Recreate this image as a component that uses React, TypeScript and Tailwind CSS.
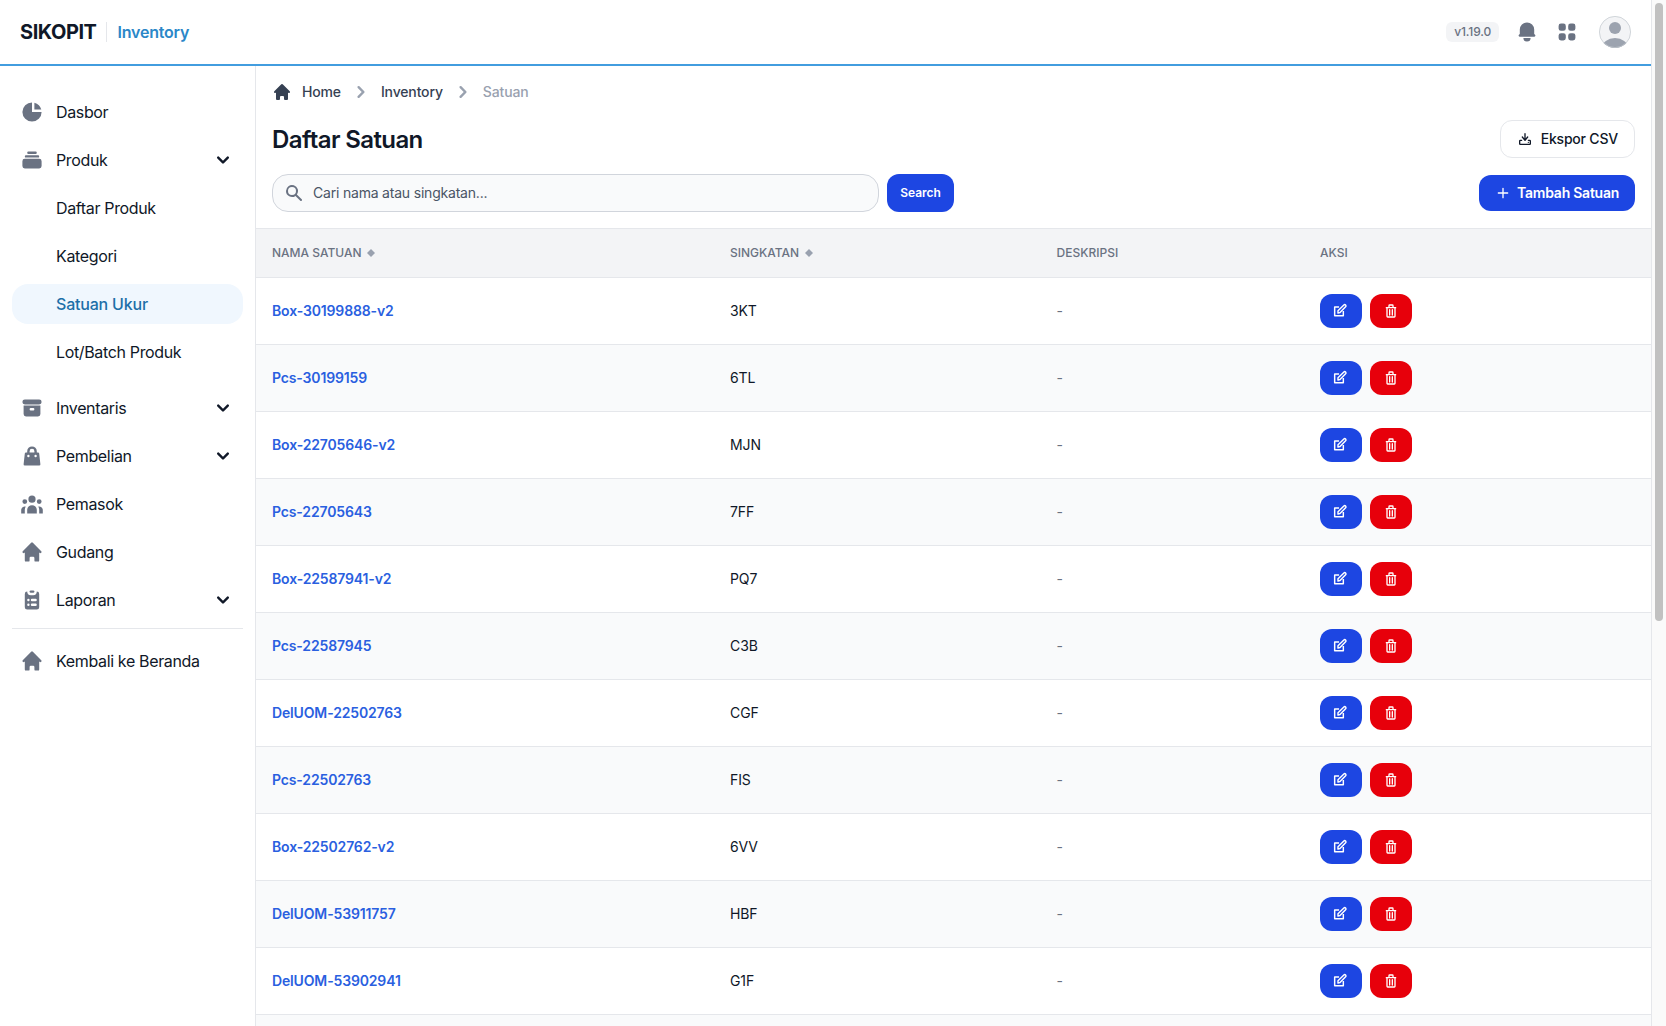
import type { ReactNode } from 'react';
import {
  HiArchive,
  HiBell,
  HiChartPie,
  HiChevronDown,
  HiChevronRight,
  HiClipboardList,
  HiCollection,
  HiHome,
  HiSearch,
  HiShoppingBag,
  HiUserGroup,
  HiViewGrid,
} from 'react-icons/hi';

interface Unit {
  name: string;
  code: string;
}

const units: Unit[] = [
  { name: 'Box-30199888-v2', code: '3KT' },
  { name: 'Pcs-30199159', code: '6TL' },
  { name: 'Box-22705646-v2', code: 'MJN' },
  { name: 'Pcs-22705643', code: '7FF' },
  { name: 'Box-22587941-v2', code: 'PQ7' },
  { name: 'Pcs-22587945', code: 'C3B' },
  { name: 'DelUOM-22502763', code: 'CGF' },
  { name: 'Pcs-22502763', code: 'FIS' },
  { name: 'Box-22502762-v2', code: '6VV' },
  { name: 'DelUOM-53911757', code: 'HBF' },
  { name: 'DelUOM-53902941', code: 'G1F' },
];

const productLinks = ['Daftar Produk', 'Kategori', 'Satuan Ukur', 'Lot/Batch Produk'];

const StrokeIcon = ({ d, className }: { d: string; className: string }) => (
  <svg className={className} fill="none" viewBox="0 0 24 24" stroke="currentColor" aria-hidden="true">
    <path strokeLinecap="round" strokeLinejoin="round" strokeWidth="2" d={d} />
  </svg>
);

const EditIcon = () => (
  <svg className="mr-0.5 h-4 w-4" fill="none" viewBox="0 0 24 24" stroke="currentColor" aria-hidden="true">
    <path
      strokeLinecap="square"
      strokeLinejoin="round"
      strokeWidth="2.2"
      d="M9.5 6H4v13h13v-6M9 15v-3.4l8.8-8.5a1.8 1.8 0 0 1 2.6 2.6L12 14.3 9 15Z"
    />
  </svg>
);

const SidebarItem = ({ icon, label, expandable }: { icon: ReactNode; label: string; expandable?: boolean }) => (
  <a href="#" className="flex h-10 items-center rounded-lg p-2">
    <span className="text-2xl text-gray-500">{icon}</span>
    <span className="ml-3 flex-1">{label}</span>
    {expandable && <HiChevronDown className="h-6 w-6" />}
  </a>
);

const Sidebar = () => (
  <aside className="w-64 shrink-0 border-r border-gray-200 px-3 pt-[26px] text-base tracking-[-0.35px] text-gray-900">
    <nav className="flex flex-col gap-2">
      <SidebarItem icon={<HiChartPie />} label="Dasbor" />
      <SidebarItem icon={<HiCollection />} label="Produk" expandable />
      <ul className="flex flex-col gap-2 pb-2">
        {productLinks.map((label) => (
          <li key={label}>
            <a
              href="#"
              className={
                label === 'Satuan Ukur'
                  ? 'flex h-10 items-center rounded-2xl bg-[#f0f7fe] pl-11 font-medium tracking-[-0.2px] text-[#1d6fa8]'
                  : 'flex h-10 items-center pl-11'
              }
            >
              {label}
            </a>
          </li>
        ))}
      </ul>
      <SidebarItem icon={<HiArchive />} label="Inventaris" expandable />
      <SidebarItem icon={<HiShoppingBag />} label="Pembelian" expandable />
      <SidebarItem icon={<HiUserGroup />} label="Pemasok" />
      <SidebarItem icon={<HiHome />} label="Gudang" />
      <SidebarItem icon={<HiClipboardList />} label="Laporan" expandable />
      <div className="border-t border-gray-200 pt-3">
        <SidebarItem icon={<HiHome />} label="Kembali ke Beranda" />
      </div>
    </nav>
  </aside>
);

const Header = () => (
  <header className="flex h-[66px] shrink-0 items-center justify-between border-b-2 border-[#429ddf] pr-5 pl-5">
    <div className="flex items-center">
      <span className="text-xl font-bold tracking-[-0.45px] text-gray-900">SIKOPIT</span>
      <span className="ml-2.5 border-l border-gray-200 py-0.5 pl-2.5 text-base leading-4 font-semibold tracking-[-0.2px] text-[#2b87c8]">
        Inventory
      </span>
    </div>
    <div className="flex items-center text-gray-500">
      <span className="rounded-md bg-gray-100 px-2 py-0.5 text-xs font-medium tracking-[-0.15px]">v1.19.0</span>
      <HiBell className="ml-4 h-6 w-6" />
      <HiViewGrid className="ml-4 h-6 w-6" />
      <svg className="ml-5 h-8 w-8" viewBox="0 0 32 32" aria-hidden="true">
        <clipPath id="avatar">
          <circle cx="16" cy="16" r="16" />
        </clipPath>
        <g clipPath="url(#avatar)">
          <rect width="32" height="32" fill="#f3f4f6" />
          <circle cx="16" cy="12" r="6" fill="#9ca3af" />
          <ellipse cx="16" cy="32" rx="13" ry="10" fill="#9ca3af" />
        </g>
        <circle cx="16" cy="16" r="15.6" fill="none" stroke="#c3c8cf" strokeWidth="0.7" />
      </svg>
    </div>
  </header>
);

const Toolbar = () => (
  <section className="px-4 pt-4">
    <div className="flex h-5 items-center text-sm font-medium tracking-[-0.15px] text-gray-700">
      <HiHome className="mr-2.5 h-5 w-5" />
      Home
      <HiChevronRight className="mx-2 h-6 w-6 text-gray-400" />
      Inventory
      <HiChevronRight className="mx-2 h-6 w-6 text-gray-400" />
      <span className="text-gray-400">Satuan</span>
    </div>
    <div className="mt-[18px] flex h-[38px] items-center justify-between">
      <h1 className="pt-0.5 text-2xl font-semibold tracking-[-0.6px] text-gray-900">Daftar Satuan</h1>
      <button className="flex h-[38px] items-center rounded-xl border border-gray-200 px-4 text-sm font-medium tracking-[-0.2px] text-gray-900">
        <StrokeIcon
          className="mr-2 h-4 w-4"
          d="M12 13V4M7 14H5a1 1 0 0 0-1 1v4a1 1 0 0 0 1 1h14a1 1 0 0 0 1-1v-4a1 1 0 0 0-1-1h-2m-1-5-4 5-4-5m9 8h.01"
        />
        Ekspor CSV
      </button>
    </div>
    <div className="mt-4 flex h-[38px] items-center">
      <div className="flex h-[38px] w-[607px] items-center rounded-2xl border border-gray-300 bg-gray-50 pl-[11px] text-sm tracking-[-0.2px] text-gray-600">
        <HiSearch className="mr-[9px] h-5 w-5 text-gray-500" />
        Cari nama atau singkatan...
      </div>
      <button className="ml-2 h-[38px] w-[67px] rounded-xl bg-[#1d46e2] text-xs font-semibold text-white">Search</button>
      <button className="ml-auto flex h-9 items-center rounded-xl bg-[#1d46e2] px-4 text-sm font-semibold tracking-[-0.25px] text-white">
        <StrokeIcon className="mr-1.5 h-4 w-4" d="M5 12h14m-7 7V5" />
        Tambah Satuan
      </button>
    </div>
  </section>
);

const SortMark = () => (
  <svg className="ml-1.5 h-2 w-2 text-gray-400" viewBox="0 0 8 8" fill="currentColor" aria-hidden="true">
    <path d="M4 0l4 4-4 4-4-4z" />
  </svg>
);

const UnitTable = () => (
  <table className="mt-4 w-full table-fixed border-collapse text-left text-sm">
    <colgroup>
      <col className="w-[458px]" />
      <col className="w-[326.5px]" />
      <col className="w-[263.5px]" />
      <col />
    </colgroup>
    <thead className="border-y border-gray-200 bg-gray-100 text-xs text-gray-500">
      <tr className="h-[49px]">
        <th className="px-4 font-medium">
          <span className="flex items-center">
            NAMA SATUAN
            <SortMark />
          </span>
        </th>
        <th className="px-4 font-medium">
          <span className="flex items-center">
            SINGKATAN
            <SortMark />
          </span>
        </th>
        <th className="px-4 font-medium">DESKRIPSI</th>
        <th className="px-4 font-medium">AKSI</th>
      </tr>
    </thead>
    <tbody>
      {units.map((unit) => (
        <tr key={unit.name} className="h-[67px] border-b border-gray-200 even:bg-gray-50">
          <td className="px-4 font-semibold tracking-[-0.15px] text-[#2a5fe0]">{unit.name}</td>
          <td className="px-4 tracking-[-0.1px] text-gray-900">{unit.code}</td>
          <td className="px-4 text-gray-500">-</td>
          <td className="px-4">
            <div className="flex gap-2 text-white">
              <button aria-label="Edit" className="flex h-[34px] w-[42px] items-center justify-center rounded-xl bg-[#1d46e2]">
                <EditIcon />
              </button>
              <button aria-label="Hapus" className="flex h-[34px] w-[42px] items-center justify-center rounded-xl bg-[#e7000b]">
                <StrokeIcon
                  className="h-4 w-4"
                  d="M5 7h14m-9 3v8m4-8v8M10 3h4a1 1 0 0 1 1 1v3H9V4a1 1 0 0 1 1-1ZM6 7h12v13a1 1 0 0 1-1 1H7a1 1 0 0 1-1-1V7Z"
                />
              </button>
            </div>
          </td>
        </tr>
      ))}
      <tr className="h-[67px] bg-gray-50">
        <td colSpan={4} />
      </tr>
    </tbody>
  </table>
);

export default function App() {
  return (
    <div className="flex h-[1026px] w-[1666px] overflow-hidden bg-white font-['Inter',sans-serif]">
      <div className="flex w-[1651px] flex-col overflow-hidden">
        <Header />
        <div className="flex min-h-0 flex-1">
          <Sidebar />
          <main className="flex-1 overflow-hidden">
            <Toolbar />
            <UnitTable />
          </main>
        </div>
      </div>
      <div className="flex w-[15px] justify-center border-l border-gray-200 bg-[#fafafa] pt-[3px]">
        <div className="h-[618px] w-2 rounded-full bg-[#c1c1c1]" />
      </div>
    </div>
  );
}
